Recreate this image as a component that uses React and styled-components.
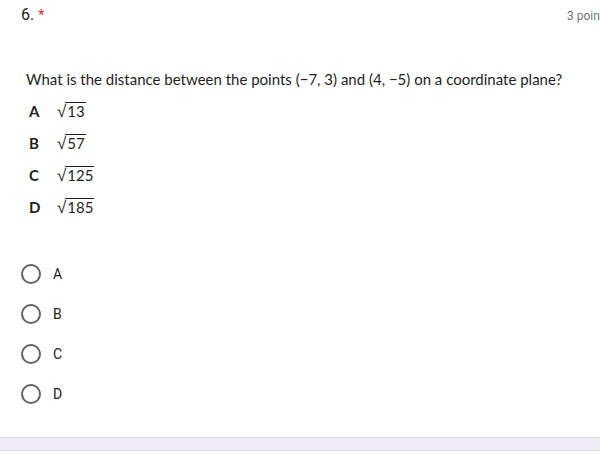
import React from 'react';
import styled, { createGlobalStyle } from 'styled-components';

const GlobalStyle = createGlobalStyle`
  body {
    margin: 0;
    background: #fff;
  }
`;

const Page = styled.div`
  width: 600px;
  height: 453px;
  overflow: hidden;
  display: flex;
  flex-direction: column;
  background: #fff;
`;

const Header = styled.div`
  display: flex;
  justify-content: space-between;
  align-items: baseline;
  padding: 5px 0 0 21px;
  height: 30px;
`;

const Number = styled.div`
  font-family: Roboto, 'Liberation Sans', sans-serif;
  font-size: 16px;
  color: #202124;
`;

const Star = styled.span`
  color: #d93025;
  margin-left: 4px;
  font-size: 14px;
`;

const Points = styled.div`
  font-family: Roboto, 'Liberation Sans', sans-serif;
  font-size: 12px;
  color: #70757a;
  white-space: nowrap;
  margin-right: -10px;
`;

const Question = styled.div`
  padding: 35px 0 0 26px;
  font-family: Lato, 'Open Sans', sans-serif;
  font-size: 15px;
  color: #231f20;
  white-space: nowrap;
`;

const ChoiceList = styled.div`
  display: flex;
  flex-direction: column;
  gap: 12px;
  padding: 13px 0 0 29px;
`;

const Choice = styled.div`
  display: flex;
  align-items: center;
  height: 20px;
  font-family: Lato, 'Open Sans', sans-serif;
  font-size: 15px;
  color: #231f20;
`;

const Letter = styled.span`
  font-weight: 700;
  width: 28px;
`;

const Root = styled.span`
  display: inline-flex;
  align-items: flex-end;
`;

const Radical = styled.span`
  font-family: 'DejaVu Sans', sans-serif;
  font-weight: 300;
  font-size: 17px;
  line-height: 18px;
  margin-right: -1px;
`;

const Radicand = styled.span`
  border-top: 1px solid #231f20;
  padding: 0 1px 0 2px;
  line-height: 17px;
`;

const Options = styled.div`
  display: flex;
  flex-direction: column;
  gap: 20px;
  padding: 47px 0 0 21px;
`;

const Option = styled.label`
  display: flex;
  align-items: center;
  gap: 12px;
  height: 20px;
  font-family: Roboto, 'Liberation Sans', sans-serif;
  font-size: 14px;
  color: #202124;
`;

const Ring = styled.span`
  box-sizing: border-box;
  width: 20px;
  height: 20px;
  border-radius: 50%;
  border: 2px solid #5f6368;
`;

const Spacer = styled.div`
  flex: 1;
`;

const Footer = styled.div`
  height: 12px;
  background: #f0ebf8;
  border-top: 1px solid #dadce0;
  border-bottom: 1px solid #dadce0;
  margin-bottom: 2px;
`;

const choices = [
  ['A', '13'],
  ['B', '57'],
  ['C', '125'],
  ['D', '185'],
];

export default function App() {
  return (
    <Page>
      <GlobalStyle />
      <Header>
        <Number>
          6.<Star>*</Star>
        </Number>
        <Points>3 points</Points>
      </Header>
      <Question>
        What is the distance between the points (−7, 3) and (4, −5) on a coordinate plane?
      </Question>
      <ChoiceList>
        {choices.map(([l, n]) => (
          <Choice key={l}>
            <Letter>{l}</Letter>
            <Root>
              <Radical>√</Radical>
              <Radicand>{n}</Radicand>
            </Root>
          </Choice>
        ))}
      </ChoiceList>
      <Options>
        {choices.map(([l]) => (
          <Option key={l}>
            <Ring />
            {l}
          </Option>
        ))}
      </Options>
      <Spacer />
      <Footer />
    </Page>
  );
}
